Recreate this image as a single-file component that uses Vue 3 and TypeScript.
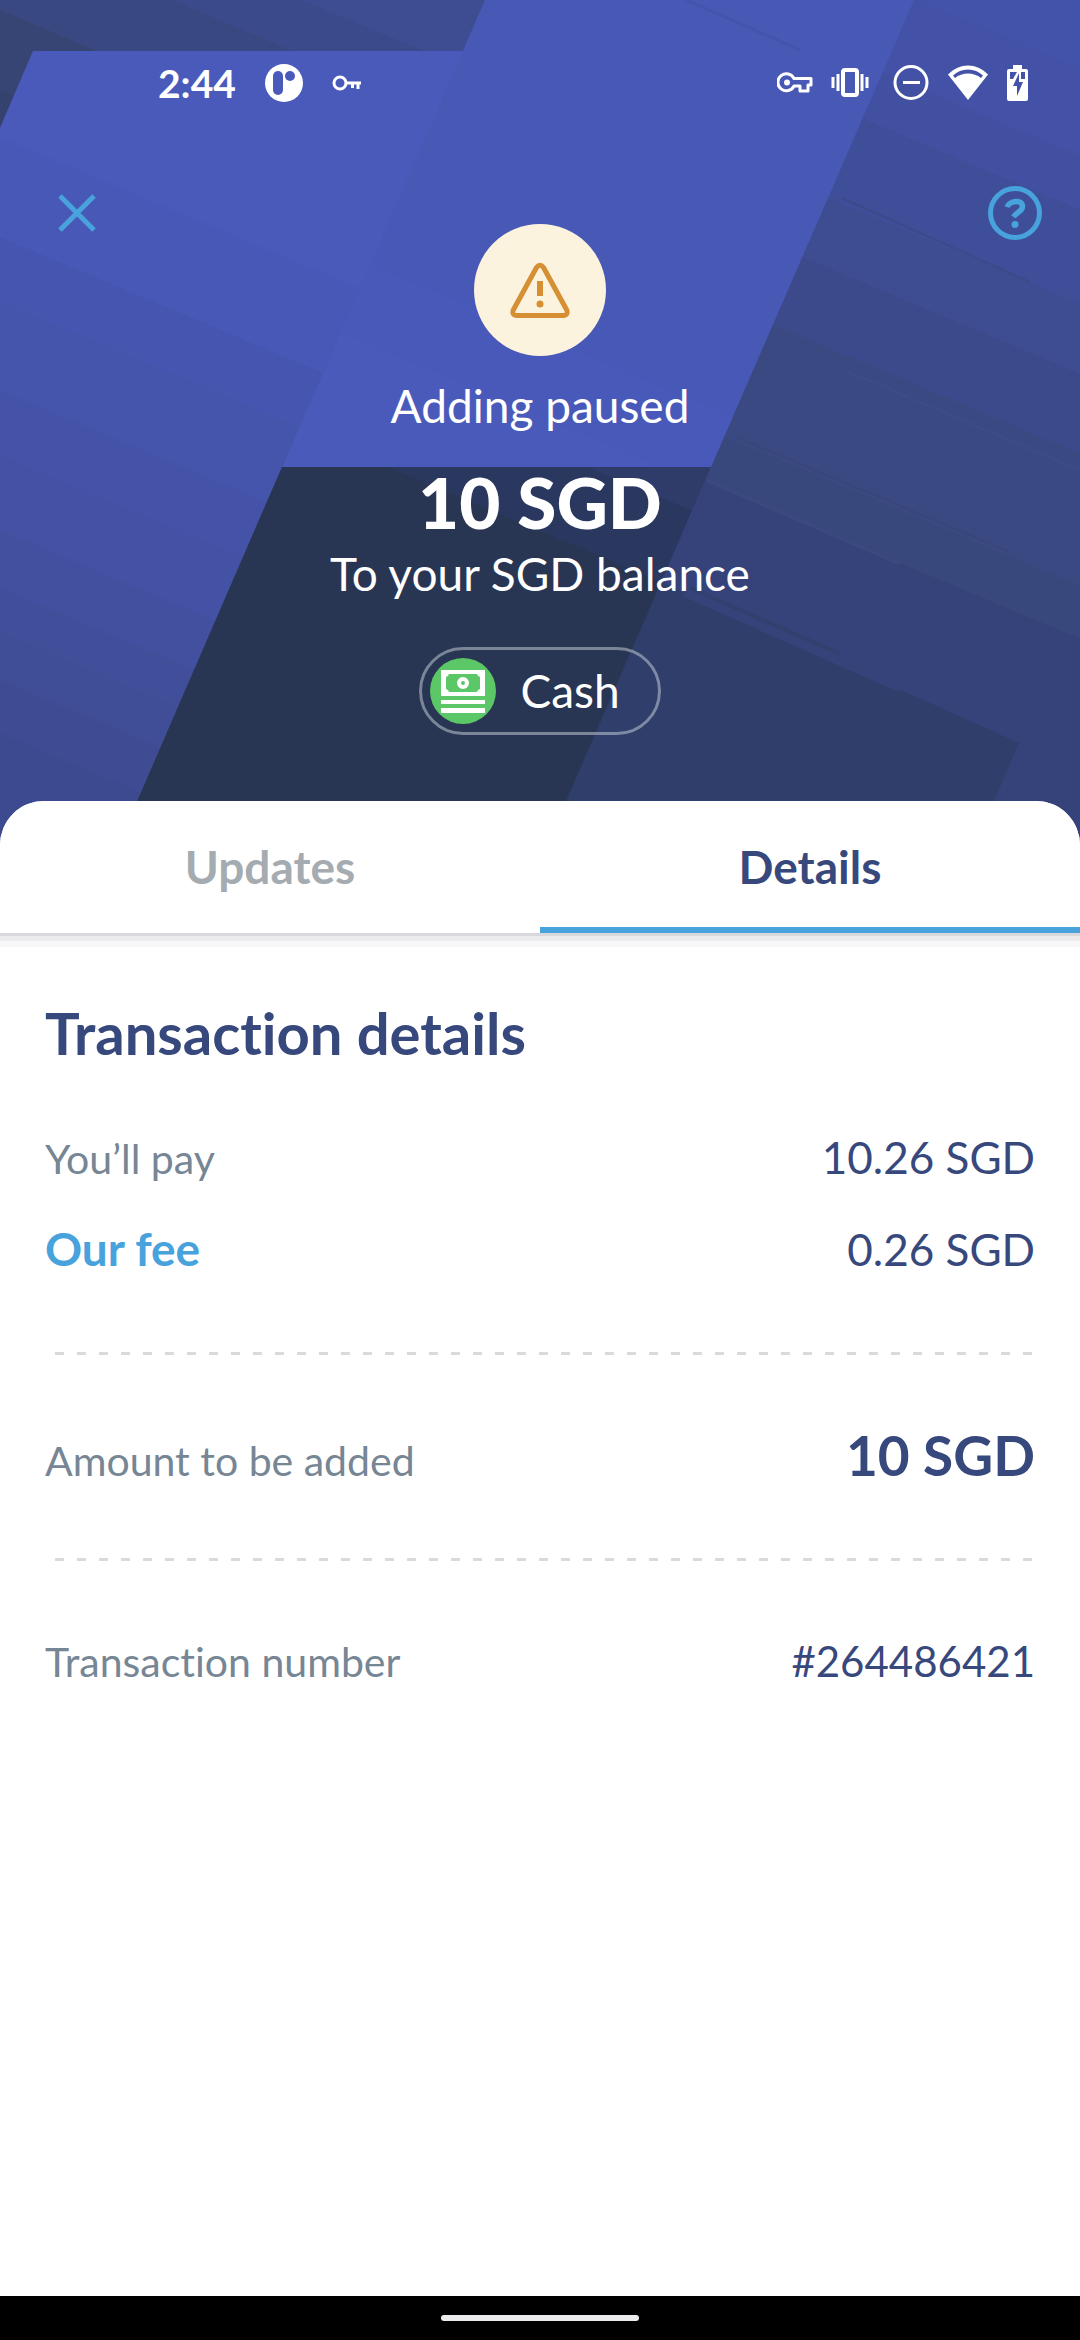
<script setup lang="ts">
import { ref } from 'vue'

interface Ramp {
  id: string
  from: number
  to: number
  steps: [number, string][]
}

// Each ramp is a set of flat diagonal stripes; a step holds the height at
// which its stripe starts on the left edge, and the stripe's colour.
const ramps: Ramp[] = [
  { id: 'corner', from: -300, to: 200, steps: [[-300, '#3e4c92'], [-127, '#3b4a8a'], [-72, '#394880'], [10, '#374574'], [90, '#36426e']] },
  { id: 'left', from: -200, to: 900, steps: [[-200, '#4a5abb'], [137, '#4858b6'], [237, '#4656b0'], [301, '#4555ac'], [390, '#4453a8'], [455, '#4352a4'], [530, '#42509f'], [588, '#414f9b'], [632, '#404e97'], [680, '#3f4c94'], [733, '#3d4a90']] },
  { id: 'centre', from: -400, to: 400, steps: [[-400, '#4858b5'], [40, '#4858b7'], [110, '#4959b9'], [190, '#4a5abb']] },
  { id: 'dark', from: 100, to: 800, steps: [[100, '#2f3c6a'], [220, '#2a385f'], [304, '#283653']] },
  { id: 'right', from: -500, to: 700, steps: [[-500, '#4453aa'], [-386, '#4352a6'], [-298, '#4150a0'], [-244, '#3f4e99'], [-150, '#3e4c91'], [-80, '#3c4a8b'], [0, '#3b4982'], [132, '#39487c'], [185, '#36437a']] },
]

function stops(ramp: Ramp) {
  const span = ramp.to - ramp.from
  return ramp.steps.flatMap(([at, color], i) => {
    const next = ramp.steps[i + 1]
    return [
      { offset: (at - ramp.from) / span, color },
      { offset: next ? (next[0] - ramp.from) / span : 1, color },
    ]
  })
}

const tabs = ['Updates', 'Details']
const active = ref('Details')
</script>

<template>
  <div class="screen">
    <header class="hero">
      <svg class="backdrop" viewBox="0 0 1080 850" preserveAspectRatio="xMidYMin slice" aria-hidden="true">
        <defs>
          <linearGradient
            v-for="ramp in ramps"
            :id="ramp.id"
            :key="ramp.id"
            gradientUnits="userSpaceOnUse"
            x1="0"
            :y1="ramp.from"
            :x2="-0.357 * (ramp.to - ramp.from)"
            :y2="ramp.from + 0.85 * (ramp.to - ramp.from)"
          >
            <stop v-for="(stop, i) in stops(ramp)" :key="i" :offset="stop.offset" :stop-color="stop.color" />
          </linearGradient>
        </defs>
        <rect width="1080" height="850" fill="url(#right)" />
        <path d="M0 0H485L463 52H33L0 128Z" fill="url(#corner)" />
        <path d="M33 51H464L282 467L116 850H0V128Z" fill="url(#left)" />
        <path d="M485 0H914L711 467H282Z" fill="url(#centre)" />
        <path d="M661 582L1019 743L973 850H545Z" fill="#303e6b" />
        <path d="M282 467H711L545 850H116Z" fill="url(#dark)" />
        <g fill="none" stroke-width="3">
          <path d="M686 0L800 50" stroke="#4454ac" />
          <path d="M842 198L1030 282" stroke="#3c4a8a" stroke-width="2" />
          <path d="M844 370L1080 470" stroke="#3e4c86" stroke-width="2" />
          <path d="M736 437L1010 552" stroke="#38467c" stroke-width="2" />
          <path d="M708 481L900 564" stroke="#3b4882" />
          <path d="M690 588L840 654" stroke="#32406f" stroke-width="4" />
          <path d="M684 594L900 690" stroke="#36437a" stroke-width="5" />
        </g>
      </svg>

      <div class="status">
        <div class="status-left">
          <span class="clock">2:44</span>
          <svg width="38" height="38" viewBox="0 0 38 38">
            <circle cx="19" cy="19" r="19" fill="#fff" />
            <rect x="8" y="7" width="10" height="24" rx="5" fill="#4a5abb" />
            <circle cx="25" cy="12" r="5" fill="#4a5abb" />
          </svg>
          <svg width="30" height="16" viewBox="0 0 30 16" fill="none" stroke="#fff">
            <circle cx="8" cy="8" r="6" stroke-width="3" />
            <path d="M14 8H29M20.500 8V13M26 8V14" stroke-width="3" />
          </svg>
        </div>
        <div class="status-right">
          <svg width="36" height="22" viewBox="0 0 36 22" fill="none" stroke="#fff" stroke-width="3">
            <path d="M17 6.500H34V13H31V19H23V14H17A8.500 8.500 0 1 1 17 6.500Z" stroke-linejoin="round" />
            <circle cx="10" cy="10.500" r="3" fill="#fff" stroke="none" />
          </svg>
          <svg width="44" height="30" viewBox="0 0 44 30" fill="none" stroke="#fff" stroke-width="3">
            <rect x="12" y="2" width="14" height="25" rx="2" stroke-width="4" />
            <path d="M2 9V20M7 6V23M31 6V23M36 9V20" />
          </svg>
          <svg width="36" height="36" viewBox="0 0 36 36" fill="none" stroke="#fff" stroke-width="3">
            <circle cx="18" cy="17.500" r="16" />
            <path d="M10 17.500H27" />
          </svg>
          <svg width="42" height="36" viewBox="0 0 42 36">
            <path d="M21 35L1 9.500C13-2.500 29-2.500 41 9.500Z" fill="#fff" />
            <path d="M6 10.500C14 2.500 28 2.500 36 10.500L34 13C27 7 15 7 8 13Z" fill="#4453a8" />
          </svg>
          <svg width="22" height="36" viewBox="0 0 22 36">
            <path d="M6 0H15V4H19Q21 4 21 6V34Q21 36 19 36H2Q0 36 0 34V6Q0 4 2 4H6Z" fill="#fff" />
            <path d="M3 7H10L6 14H3ZM18 7H14V14H18Z" fill="#4453a8" />
            <path d="M12 8L6 21H10V31L16 17H12Z" fill="#4453a8" />
          </svg>
        </div>
      </div>

      <div class="top">
        <button class="icon-button close" type="button" aria-label="Close">
          <svg width="38" height="38" viewBox="0 0 38 38" fill="none" stroke="#48a2dc" stroke-width="5">
            <path d="M2 2L36 36M36 2L2 36" />
          </svg>
        </button>
        <div class="summary">
          <svg class="warning" width="132" height="132" viewBox="0 0 132 132">
            <circle cx="66" cy="66" r="66" fill="#fcf3df" />
            <path d="M62.500 43.500Q66 39 69.500 43.500L93 86.500Q94 91 90 91.500H42Q38 91 39 86.500Z" fill="none" stroke="#d68f33" stroke-width="5" stroke-linejoin="round" />
            <rect x="63" y="57" width="6" height="15" fill="#d68f33" />
            <circle cx="66" cy="80" r="3.500" fill="#d68f33" />
          </svg>
          <p class="line state">Adding paused</p>
          <h1 class="amount">10 SGD</h1>
          <p class="line">To your SGD balance</p>
          <div class="method">
            <svg width="66" height="66" viewBox="0 0 66 66">
              <circle cx="33" cy="33" r="33" fill="#5bc767" />
              <path d="M11 12H55V38H11Z" fill="#fff" />
              <path d="M19 16H47A4 4 0 0 0 50 19V31A4 4 0 0 0 47 34H19A4 4 0 0 0 16 31V19A4 4 0 0 0 19 16Z" fill="#5bc767" />
              <circle cx="33" cy="25" r="4" fill="none" stroke="#fff" stroke-width="4" />
              <path d="M11 42H55V46H11ZM11 50H55V55H11Z" fill="#fff" />
            </svg>
            <span>Cash</span>
          </div>
        </div>
        <button class="icon-button help" type="button" aria-label="Help">
          <svg width="54" height="54" viewBox="0 0 54 54" fill="none" stroke="#48a2dc" stroke-width="5">
            <circle cx="27" cy="27" r="24.500" />
            <path d="M19 21C21 15 34.500 12.500 34.500 20.500C34.500 25.500 28.500 26 25.500 31" stroke-width="5.500" />
            <circle cx="27" cy="38.500" r="3.500" fill="#48a2dc" stroke="none" />
          </svg>
        </button>
      </div>
    </header>

    <main class="sheet">
      <div class="tabs" role="tablist">
        <button
          v-for="tab in tabs"
          :key="tab"
          class="tab"
          :class="{ active: tab === active }"
          type="button"
          role="tab"
          :aria-selected="tab === active"
          @click="active = tab"
        >
          {{ tab }}
        </button>
      </div>
      <section class="details">
        <h2>Transaction details</h2>
        <dl>
          <div class="row">
            <dt>You’ll pay</dt>
            <dd>10.26 SGD</dd>
          </div>
          <div class="row">
            <dt><a href="#fee">Our fee</a></dt>
            <dd>0.26 SGD</dd>
          </div>
        </dl>
        <div class="dashes"></div>
        <dl>
          <div class="row total">
            <dt>Amount to be added</dt>
            <dd>10 SGD</dd>
          </div>
        </dl>
        <div class="dashes"></div>
        <dl>
          <div class="row">
            <dt>Transaction number</dt>
            <dd class="reference">#264486421</dd>
          </div>
        </dl>
      </section>
    </main>

    <footer class="nav"><span class="handle"></span></footer>
  </div>
</template>

<style>
body {
  background: #fff;
}
</style>

<style scoped>
.screen {
  display: flex;
  flex-direction: column;
  min-height: 100vh;
  font-family: Lato, "Noto Sans", sans-serif;
  font-variant-ligatures: none;
  color: #37487d;
}

.screen svg {
  display: block;
  flex: none;
}

p,
h1,
h2,
dl,
dd {
  margin: 0;
}

button {
  margin: 0;
  padding: 0;
  border: 0;
  background: none;
  font: inherit;
  font-variant-ligatures: none;
  cursor: pointer;
}

.hero {
  position: relative;
  padding: 60px 0 114px;
  color: #fff;
  overflow: hidden;
}

.screen .backdrop {
  position: absolute;
  inset: 0;
  width: 100%;
  height: 100%;
}

.status,
.top {
  position: relative;
  display: flex;
  justify-content: space-between;
}

.status {
  align-items: center;
  height: 46px;
  padding: 0 51px 0 158px;
}

.status-left,
.status-right {
  display: flex;
  align-items: center;
}

.status-left {
  gap: 29px;
}

.status-right {
  gap: 18px;
}

.clock {
  font-size: 39px;
  line-height: 46px;
  font-weight: 700;
}

.top {
  align-items: flex-start;
  padding: 66px 28px 0;
}

.icon-button {
  display: flex;
  align-items: center;
  justify-content: center;
  width: 98px;
  height: 82px;
}

.close {
  justify-content: flex-start;
  padding-left: 30px;
}

.help {
  justify-content: flex-end;
  padding-right: 10px;
}

.summary {
  display: flex;
  flex-direction: column;
  align-items: center;
  padding-top: 52px;
}

.line {
  font-size: 46px;
  line-height: 56px;
}

.state {
  margin: 22px 0 24px;
}

.amount {
  font-size: 71px;
  line-height: 88px;
  font-weight: 900;
}

.method {
  display: flex;
  align-items: center;
  gap: 24px;
  margin-top: 45px;
  padding: 8px 38px 8px 8px;
  border: 3px solid rgba(203, 213, 220, 0.5);
  border-radius: 44px;
  font-size: 46px;
  line-height: 66px;
}

.sheet {
  position: relative;
  flex: 1;
  margin-top: -48px;
  border-radius: 44px 44px 0 0;
  background: #fff;
}

.tabs {
  display: flex;
  border-radius: 44px 44px 0 0;
  box-shadow: 0 3px #d9d9dd, 0 8px #ebebed, 0 14px #f7f7f7;
  background: #fff;
}

.tab {
  flex: 1;
  height: 132px;
  font-size: 46px;
  line-height: 56px;
  font-weight: 700;
  color: #a4abb1;
}

.active {
  box-shadow: inset 0 -6px #48a2dc;
  color: #37487d;
}

.details {
  padding: 68px 45px 72px;
}

h2 {
  margin-bottom: 60px;
  font-size: 58px;
  line-height: 64px;
  font-weight: 700;
}

.row {
  display: flex;
  justify-content: space-between;
  align-items: baseline;
  padding: 4px 0;
}

.row + .row {
  margin-top: 26px;
}

dt {
  font-size: 41px;
  line-height: 56px;
  color: #768695;
}

dd {
  font-size: 44px;
  line-height: 56px;
}

dt a {
  font-size: 46px;
  line-height: 46px;
  font-weight: 700;
  color: #48a2dc;
  text-decoration: none;
}

.reference {
  font-size: 42px;
}

.total {
  padding: 0;
}

.total dd {
  font-size: 55px;
  line-height: 64px;
  font-weight: 700;
}

.dashes {
  height: 3px;
  margin: 69px 3px 68px 10px;
  background: repeating-linear-gradient(90deg, #d9d9de 0 9px, transparent 9px 22px);
}

.nav {
  display: flex;
  align-items: center;
  justify-content: center;
  height: 44px;
  background: #000;
}

.handle {
  width: 198px;
  height: 6px;
  border-radius: 3px;
  background: #ebebed;
}
</style>
